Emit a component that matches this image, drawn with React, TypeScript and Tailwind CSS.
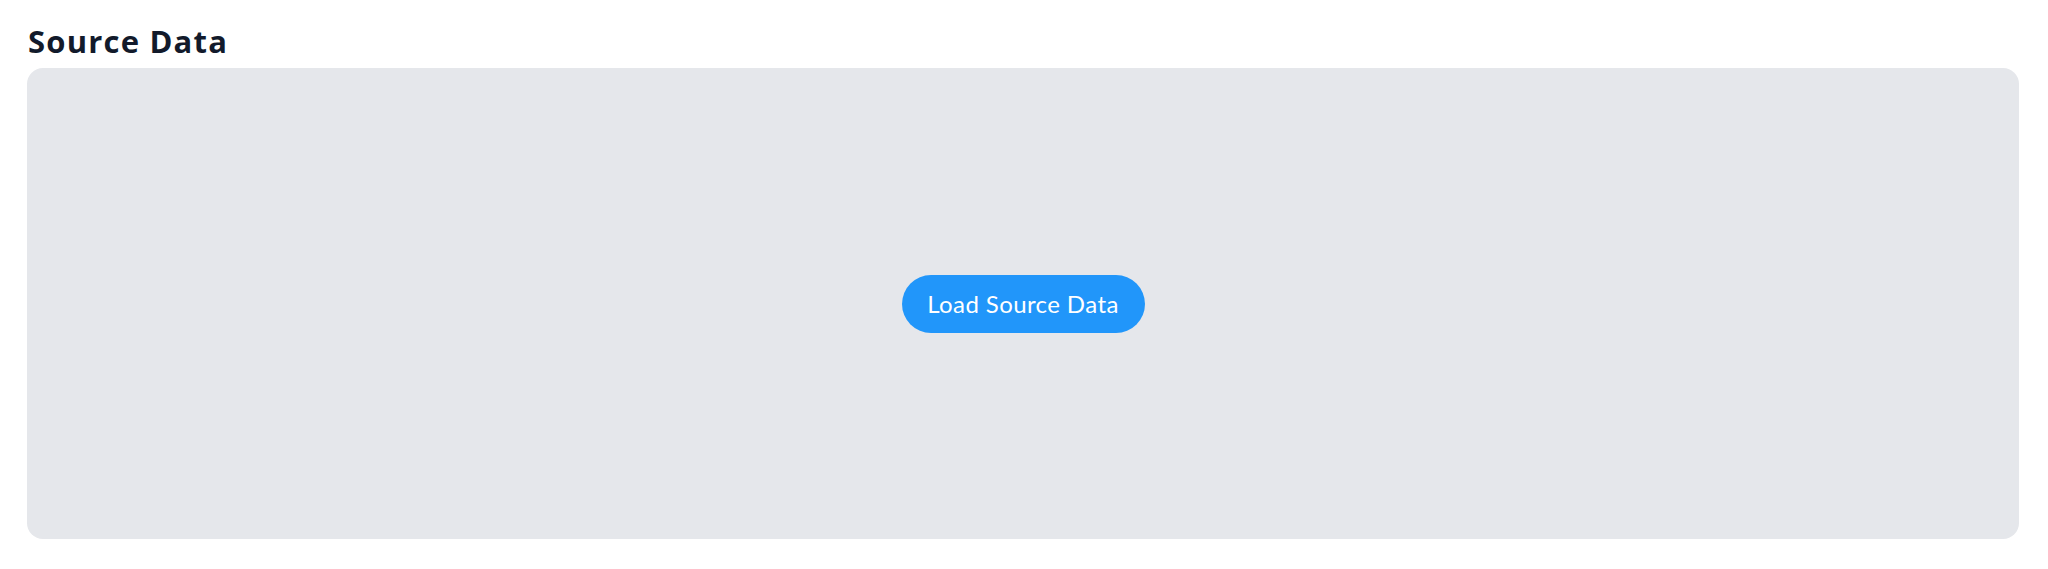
export default function App() {
  return (
    <div className="w-[2048px] h-[569px] bg-white pl-[27px] pr-[29px] pt-[20px] flex flex-col" style={{ fontFamily: "Lato, 'Noto Sans', sans-serif" }}>
      <h1 className="text-[31px] leading-[42px] font-bold text-[#121a2b] pl-[1px] tracking-[1.2px]" style={{ fontFamily: "'Open Sans', sans-serif" }}>Source Data</h1>
      <div className="mt-[6px] h-[471px] rounded-[16px] bg-[#e5e7eb] flex items-center justify-center">
        <button className="h-[58px] w-[243px] rounded-full bg-[#2196fa] text-white text-[24px] font-normal tracking-[0.4px] flex items-center justify-center">
          Load Source Data
        </button>
      </div>
    </div>
  );
}
